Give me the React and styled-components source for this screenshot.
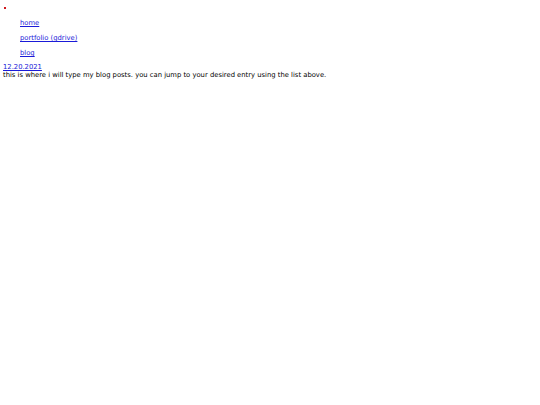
import React from "react";
import styled, { createGlobalStyle } from "styled-components";

const GlobalStyle = createGlobalStyle`
  html, body {
    margin: 0;
    padding: 0;
    background: #ffffff;
  }
  body {
    font-family: "DejaVu Sans", Verdana, sans-serif;
    font-size: 6.8px;
    color: #000000;
  }
`;

const Page = styled.div`
  padding: 3px 3px;
`;

const Marker = styled.span`
  display: block;
  width: 2px;
  height: 2px;
  margin: 4px 0 0 1px;
  background: #d0151b;
`;

const NavList = styled.ul`
  list-style: none;
  margin: 0;
  padding: 10px 0 0 17px;
  display: flex;
  flex-direction: column;
  gap: 6px;
`;

const NavItem = styled.li`
  line-height: 9px;
`;

const Link = styled.a`
  color: #1a1ad8;
  text-decoration: underline;
`;

const Post = styled.div`
  margin-top: 5px;
  line-height: 8px;
`;

const DateLink = styled(Link)`
  display: block;
`;

const Body = styled.p`
  margin: 0;
`;

export default function App() {
  return (
    <>
      <GlobalStyle />
      <Page>
        <Marker />
        <NavList>
          <NavItem>
            <Link href="#">home</Link>
          </NavItem>
          <NavItem>
            <Link href="#">portfolio (gdrive)</Link>
          </NavItem>
          <NavItem>
            <Link href="#">blog</Link>
          </NavItem>
        </NavList>
        <Post>
          <DateLink href="#">12.20.2021</DateLink>
          <Body>
            this is where i will type my blog posts. you can jump to your
            desired entry using the list above.
          </Body>
        </Post>
      </Page>
    </>
  );
}
